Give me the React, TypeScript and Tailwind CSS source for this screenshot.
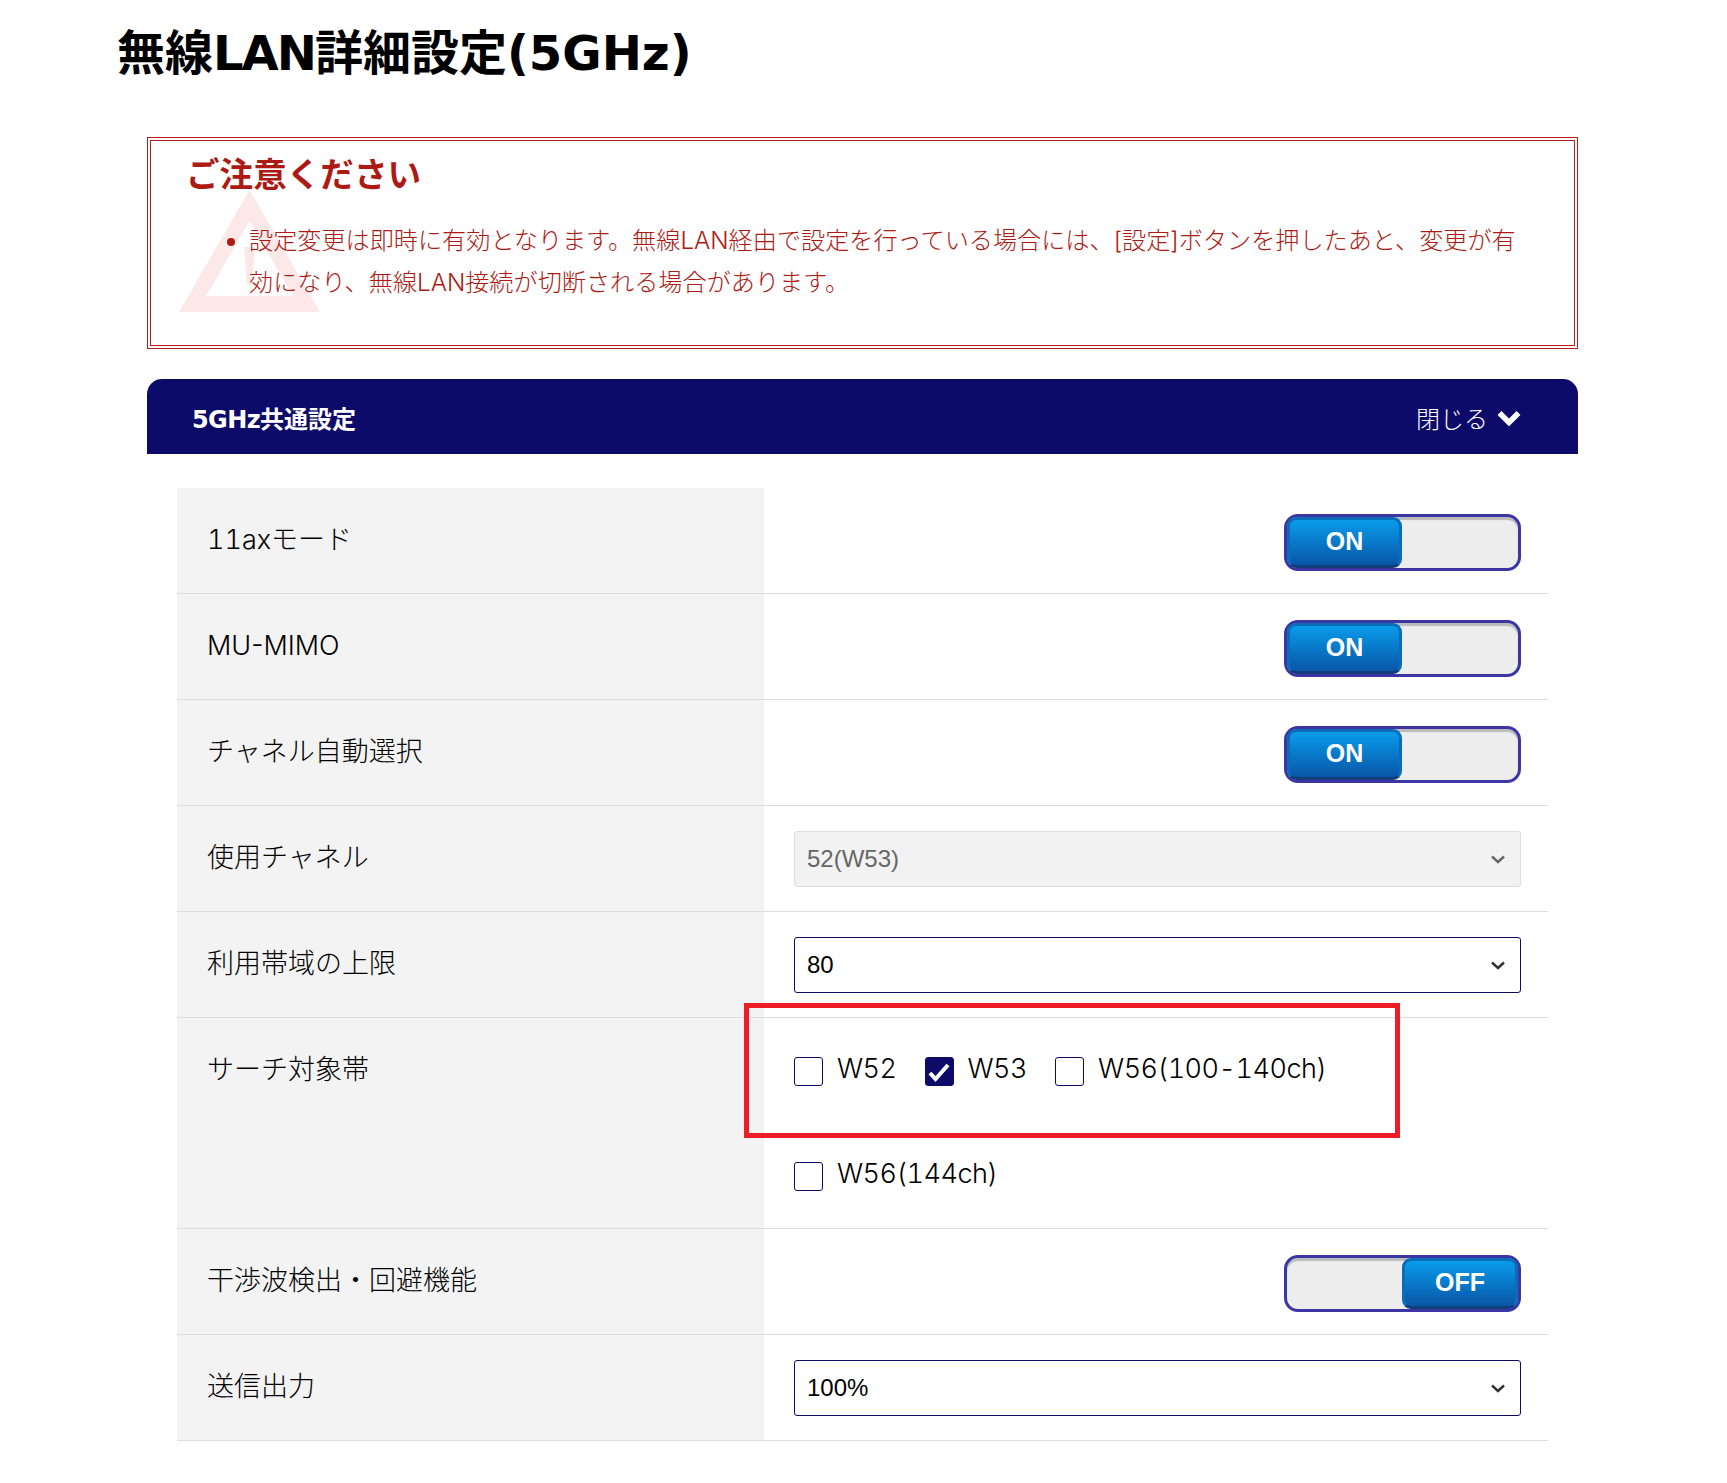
import type { ReactNode } from "react";

const jp = 'font-["Inter","Noto_Sans_CJK_JP",sans-serif]';
const heading = 'font-["DejaVu_Sans","Noto_Sans_CJK_JP",sans-serif]';

const Toggle = ({ on }: { on: boolean }) => (
  <div className="ml-auto flex h-[57px] w-[237px] rounded-[14px] border-[3px] border-[#3c36a4] bg-[#ededed] shadow-[inset_0_3px_1px_#bbb]">
    <div
      className={`flex h-[51px] items-center justify-center rounded-[9px] border-[3px] border-[#0b6cb8] border-b-[#123f7c] bg-gradient-to-b from-[#0a9cea] to-[#0a56a8] pb-[2px] font-["Liberation_Sans",sans-serif] text-[25px] font-bold text-white ${on ? "w-[115px]" : "ml-auto w-[116px]"}`}
    >
      {on ? "ON" : "OFF"}
    </div>
  </div>
);

const Select = ({ value, disabled }: { value: string; disabled?: boolean }) => (
  <div
    className={`-mt-px flex h-14 items-center justify-between rounded-[3px] border pl-3 pr-[15px] font-["Liberation_Sans",sans-serif] text-2xl ${
      disabled
        ? "border-[#ddd] bg-[#f2f2f2] text-[#666]"
        : "border-[#0d0b6a] bg-white text-black"
    }`}
  >
    {value}
    <svg viewBox="0 0 14 9" className="h-[9px] w-[14px]">
      <path d="M1 1.5l6 5.5 6-5.5" fill="none" stroke={disabled ? "#666" : "#333"} strokeWidth="2.4" />
    </svg>
  </div>
);

const Check = ({ label, checked }: { label: string; checked?: boolean }) => (
  <label className="flex items-center gap-[14px]">
    <span
      className={`flex size-[29px] items-center justify-center rounded-[3px] border border-[#0d0b6a] ${checked ? "bg-[#0d0b6a]" : "bg-white"}`}
    >
      {checked && (
        <svg viewBox="0 0 24 24" className="size-6">
          <path d="M3 13l5.5 6L21 5" fill="none" stroke="white" strokeWidth="4" />
        </svg>
      )}
    </span>
    <span className="-mt-[7px] text-[27px] font-light leading-none tracking-[-0.5px] tabular-nums">{label}</span>
  </label>
);

const Row = ({ label, children }: { label: ReactNode; children: ReactNode }) => (
  <div className="flex min-h-[106px] border-b border-[#ddd]">
    <div className="w-[587px] shrink-0 bg-[#f3f3f3] pl-[30px] pt-[27px] text-[27px] font-light leading-[50px]">{label}</div>
    <div className="flex-1 pl-[30px] pr-[27px] pt-[26px]">{children}</div>
  </div>
);

export default function App() {
  return (
    <div className={`min-h-[1483px] bg-white text-black ${jp}`}>
      <h1 className={`pl-[117px] pt-[18px] text-[48px] font-bold leading-[70px] ${heading}`}>
        無線<span className="tracking-[-2px]">LAN</span>詳細設定(5GHz)
      </h1>

      <div className="pl-[147px] pr-[149px] pt-[49px]">
        {/* 注意 */}
        <div className="relative h-[212px] overflow-hidden border-4 border-double border-[#b81c1c] pl-[35px] pr-[50px] pt-[12px] text-[#ad1a14]">
          <svg viewBox="0 0 141 122" className="absolute left-[28px] top-[49px] h-[122px] w-[141px]">
            <path fillRule="evenodd" d="M70.5 0L141 122H0ZM70.5 31L27 106H114Z" fill="#fce8e8" />
            <path d="M65 57H76L73 95H68Z" fill="#fce8e8" />
          </svg>
          <h2 className="relative text-[33.6px] font-bold leading-[44px]">ご注意ください</h2>
          <ul className="relative mt-[23px] list-disc pl-[63px] text-[24.15px] font-light leading-[42px]">
            <li className="marker:text-[#ad1a14]">
              設定変更は即時に有効となります。無線LAN経由で設定を行っている場合には、[設定]ボタンを押したあと、変更が有効になり、無線LAN接続が切断される場合があります。
            </li>
          </ul>
        </div>

        {/* 5GHz共通設定 */}
        <div className="mt-[30px] flex h-[75px] items-center justify-between rounded-t-[15px] bg-[#0d0b6a] pl-[45px] pr-[57px] text-white">
          <span className={`pt-[6px] text-2xl font-bold ${heading}`}>
            <span className="tracking-[-0.6px]">5GHz</span>共通設定
          </span>
          <span className="flex items-center gap-[9px] pt-[6px] text-2xl font-light">
            閉じる
            <svg viewBox="0 0 24 16" className="-mt-[4px] h-[16px] w-[24px]">
              <path d="M2.5 3l9.5 9.5L21.5 3" fill="none" stroke="white" strokeWidth="5.5" />
            </svg>
          </span>
        </div>

        <div className="mx-[30px] mt-[34px]">
          <Row label={<><span className="tabular-nums">11ax</span>モード</>}><Toggle on /></Row>
          <Row label="MU-MIMO"><Toggle on /></Row>
          <Row label="チャネル自動選択"><Toggle on /></Row>
          <Row label="使用チャネル"><Select value="52(W53)" disabled /></Row>
          <Row label="利用帯域の上限"><Select value="80" /></Row>
          <Row label="サーチ対象帯">
            <div className="flex flex-wrap gap-x-[28px] gap-y-[76px] pb-[37px] pt-[13px]">
              <Check label="W52" />
              <Check label="W53" checked />
              <Check label="W56(100-140ch)" />
              <div className="w-full"><Check label="W56(144ch)" /></div>
            </div>
          </Row>
          <Row label="干渉波検出・回避機能"><Toggle on={false} /></Row>
          <Row label="送信出力"><Select value="100%" /></Row>
        </div>
      </div>

      {/* 赤枠の注記 */}
      <div className="absolute left-[744px] top-[1003px] h-[135px] w-[656px] border-[5px] border-[#ee1c25]" />
    </div>
  );
}
